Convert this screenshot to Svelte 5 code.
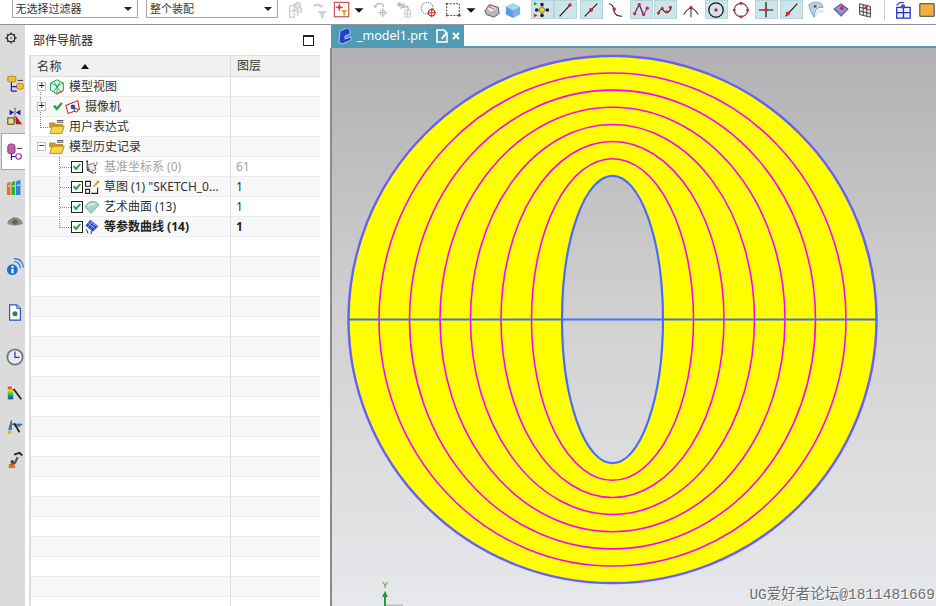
<script>
	const cellWidth = (t) => t.w ?? (t.on ? 23 : 18);

	// toolbar icons are listed by their centre, the gap before each follows from that
	const tools = [
		{ c: 310, i: 'ghostAsm' },
		{ c: 335, i: 'ghostFunnel' },
		{ c: 357, i: 'selBox' },
		{ c: 374, i: 'caret', w: 10 },
		{ c: 396, i: 'ghostCross' },
		{ c: 419, i: 'ghostDoc' },
		{ c: 444, i: 'sphere' },
		{ c: 468, i: 'dashRect' },
		{ c: 486, i: 'caret', w: 10 },
		{ c: 507, i: 'solid' },
		{ c: 528, i: 'cube' },
		{ c: 557, i: 'ctrl', on: true },
		{ c: 580, i: 'lineEnd', on: true },
		{ c: 606, i: 'lineMid', on: true },
		{ c: 631, i: 'scurve' },
		{ c: 656, i: 'poly', on: true },
		{ c: 680, i: 'wave', on: true },
		{ c: 706, i: 'fork' },
		{ c: 731, i: 'circleCentre', on: true },
		{ c: 756, i: 'circleDots' },
		{ c: 781, i: 'plus', on: true },
		{ c: 806, i: 'lineLow', on: true },
		{ c: 831, i: 'surf' },
		{ c: 856, i: 'diamond' },
		{ c: 880, i: 'gridDark' },
		{ c: 899, i: 'sep', w: 1 },
		{ c: 918, i: 'gridBlue' },
		{ c: 942, i: 'orange' }
	];
	let prev = 298;
	const placed = tools.map((t) => {
		const w = cellWidth(t);
		const gap = t.c - w / 2 - prev;
		prev = t.c - w / 2 + w;
		return { ...t, w, gap };
	});

	const rail = [
		{ i: 'asm', h: 33, gap: 22 },
		{ i: 'constraint', h: 33, gap: 0 },
		{ i: 'part', h: 37, gap: 0, on: true },
		{ i: 'books', h: 34, gap: 0 },
		{ i: 'eye', h: 34, gap: 0 },
		{ i: 'info', h: 34, gap: 12 },
		{ i: 'page', h: 34, gap: 11 },
		{ i: 'clock', h: 34, gap: 11 },
		{ i: 'rainbow', h: 33, gap: 2 },
		{ i: 'filterTool', h: 34, gap: 0 },
		{ i: 'robot', h: 34, gap: 0 }
	];

	const rows = [
		{ pad: 37, toggle: '+', icon: 'view', text: '模型视图', layer: '', conn: 'top' },
		{ pad: 37, toggle: '+', check: 'tick', icon: 'camera', text: '摄像机', layer: '', conn: 'mid' },
		{ pad: 46, icon: 'folder', text: '用户表达式', layer: '', conn: 'end' },
		{ pad: 37, toggle: '−', icon: 'folder', text: '模型历史记录', layer: '' },
		{ pad: 71, check: 'box', icon: 'datum', text: '基准坐标系 (0)', layer: '61', dim: true, conn: 'subtop' },
		{ pad: 71, check: 'box', icon: 'sketch', text: '草图 (1) "SKETCH_0...', layer: '1', conn: 'sub' },
		{ pad: 71, check: 'box', icon: 'surface', text: '艺术曲面 (13)', layer: '1', conn: 'sub' },
		{ pad: 71, check: 'box', icon: 'iso', text: '等参数曲线 (14)', layer: '1', bold: true, conn: 'subend' }
	];
	const blanks = Array.from({ length: 19 });

	const rx = [233.5, 203, 172.5, 142, 111.5, 81];
	const ry = [246.5, 229.4, 212.2, 195, 178, 160.8];
</script>

{#snippet icon(n)}
	<svg class="ico" viewBox="0 0 20 20" aria-hidden="true">
		{#if n === 'ghostAsm'}
			<path d="M4 6l5-2 0 6-5 2zM4 12v6h5v-8M9 10l4 1v6" fill="none" stroke="#c4c4c4" stroke-width="1.2" />
			<circle cx="13" cy="5" r="3.5" fill="#e2e2e2" stroke="#c4c4c4" /><circle cx="15" cy="10" r="3" fill="#e8e8e8" stroke="#c8c8c8" />
		{:else if n === 'ghostFunnel'}
			<path d="M7 11h11l-4 4v4h-3v-4z" fill="#d0d0d0" /><path d="M3 6q4-4 8 0l2-1" fill="none" stroke="#cfcfcf" stroke-width="2.4" />
		{:else if n === 'selBox'}
			<rect x="1.5" y="1.5" width="16" height="16" fill="#fff" stroke="#c8434a" stroke-width="1.2" />
			<path d="M7 3v8M3 7h8" stroke="#8c2020" /><circle cx="7" cy="7" r="2" fill="#e04040" />
			<path d="M9 10h7l-2.5 3v3h-2v-3z" fill="#e8a020" />
		{:else if n === 'caret'}
			<path d="M5 8h10l-5 5z" fill="#111" />
		{:else if n === 'ghostCross'}
			<path d="M3 7q2-5 7-4 3 1 3 4" fill="none" stroke="#bbb" stroke-width="1.5" /><path d="M1 5l3 3 2-3z" fill="#bbb" />
			<path d="M12 8v10M7 13h10" stroke="#aaa" /><circle cx="12" cy="13" r="3" fill="none" stroke="#bbb" />
		{:else if n === 'ghostDoc'}
			<circle cx="5" cy="4" r="2.5" fill="#bbb" /><circle cx="9" cy="5" r="2.5" fill="#c8c8c8" />
			<path d="M6 8l8-2 1 4" fill="none" stroke="#bbb" stroke-width="1.5" /><path d="M11 10h6v8h-6zM11 14h6M14 10v8" fill="none" stroke="#c4c4c4" />
		{:else if n === 'sphere'}
			<circle cx="8" cy="8" r="6.5" fill="none" stroke="#333" stroke-dasharray="1.4 1.4" />
			<circle cx="13" cy="13" r="3.5" fill="#fff" stroke="#c22" stroke-width="1.2" /><path d="M13 8v10M8 13h10" stroke="#c22" />
		{:else if n === 'dashRect'}
			<rect x="3" y="3" width="14" height="13" fill="none" stroke="#222" stroke-dasharray="2 1.5" />
			<circle cx="17" cy="16" r="1.6" fill="#d22" /><circle cx="3" cy="16" r="1.1" fill="#d22" /><circle cx="3" cy="3" r="1.1" fill="#d22" />
		{:else if n === 'solid'}
			<path d="M2 11l5-7 10 3 1 7-6 4-8-3z" fill="#b8b8b8" stroke="#555" /><path d="M5 8l6-2 4 3-7 3z" fill="#eee" /><path d="M7 7l6 2" stroke="#d44" />
		{:else if n === 'cube'}
			<path d="M2 6l8-4 8 4-8 4z" fill="#a8d8f0" /><path d="M2 6v9l8 4v-9z" fill="#5a9ae8" /><path d="M18 6v9l-8 4v-9z" fill="#7ab0f0" />
			<path d="M6 9l5 3v5" fill="none" stroke="#e88" />
		{:else if n === 'ctrl'}
			<path d="M10 6l4 4-4 4-4-4z" fill="#f4d020" stroke="#555" />
			<circle cx="10" cy="4" r="2" fill="#222" /><circle cx="10" cy="16" r="2" fill="#222" /><circle cx="4" cy="10" r="2" fill="#222" /><circle cx="16" cy="10" r="2" fill="#222" />
			<path d="M1 1l4 2-4 2z" fill="#1a9a30" /><path d="M1 14l4 2-4 2z" fill="#d22" />
		{:else if n === 'lineEnd'}
			<path d="M4 17L16 4" stroke="#111" stroke-width="1.2" /><circle cx="15.5" cy="4.5" r="2" fill="#d22" />
		{:else if n === 'lineMid'}
			<path d="M3 17L17 3" stroke="#111" stroke-width="1.2" /><circle cx="10" cy="10" r="2.2" fill="#d22" />
		{:else if n === 'scurve'}
			<path d="M2 3c6 0 5 6 6 9s3 5 9 5" fill="none" stroke="#222" stroke-width="1.2" /><circle cx="8" cy="9" r="2" fill="#d22" />
		{:else if n === 'poly'}
			<path d="M3 14L8 4l5 11 4-7" fill="none" stroke="#a030d0" stroke-width="1.2" /><path d="M4 12q3-8 5-6l3 9" fill="none" stroke="#222" stroke-width=".8" />
			<circle cx="3" cy="14" r="1.8" fill="#d22" /><circle cx="8" cy="4" r="1.8" fill="#d22" /><circle cx="13" cy="15" r="1.8" fill="#d22" /><circle cx="17" cy="8" r="1.8" fill="#d22" />
		{:else if n === 'wave'}
			<path d="M2 15c3-9 6-5 8-3s5 1 7-5" fill="none" stroke="#222" stroke-width="1.2" />
			<circle cx="3" cy="13" r="1.7" fill="#d22" /><circle cx="7" cy="8" r="1.7" fill="#d22" /><circle cx="12" cy="12" r="1.7" fill="#d22" /><circle cx="16" cy="7" r="1.7" fill="#d22" />
		{:else if n === 'fork'}
			<path d="M2 15Q10 1 18 15M10 7v11" fill="none" stroke="#333" stroke-width="1.2" /><circle cx="10" cy="7" r="1.8" fill="#d22" />
		{:else if n === 'circleCentre'}
			<circle cx="10" cy="10" r="8" fill="none" stroke="#111" stroke-width="1.4" /><circle cx="10" cy="10" r="2" fill="#d22" />
		{:else if n === 'circleDots'}
			<circle cx="10" cy="10" r="7.5" fill="none" stroke="#666" stroke-width="1.4" />
			<circle cx="10" cy="2.5" r="1.7" fill="#d22" /><circle cx="10" cy="17.5" r="1.7" fill="#d22" /><circle cx="2.5" cy="10" r="1.7" fill="#d22" /><circle cx="17.5" cy="10" r="1.7" fill="#d22" />
		{:else if n === 'plus'}
			<path d="M10 1v17M2 10h16" stroke="#111" stroke-width="1.3" /><circle cx="10" cy="10" r="2" fill="#d22" />
		{:else if n === 'lineLow'}
			<path d="M4 17L17 3" stroke="#111" stroke-width="1.2" /><circle cx="6.5" cy="14" r="2.2" fill="#d22" />
		{:else if n === 'surf'}
			<path d="M2 4Q10-1 16 3l2 4q-5-1-8 3-2 3-2 8-5-6-6-14z" fill="#b4d4ee" stroke="#7a9ec0" /><path d="M9 19q-1-7 5-9 3-1 5 0l-1 3q-4-1-6 1-2 2-1 5z" fill="#e4e8ec" />
			<circle cx="9" cy="6" r="1.6" fill="#d22" />
		{:else if n === 'diamond'}
			<path d="M10 3l8 6-8 8-8-8z" fill="#7a78c0" stroke="#4a4890" /><path d="M4 8l6-3 6 4-6 5z" fill="#9a98d8" /><circle cx="11" cy="8" r="2.2" fill="#d24" />
		{:else if n === 'gridDark'}
			<path d="M4 3l12 3v12L4 15zM8 4v12M12 5v12M4 7l12 3M4 11l12 3" fill="#f0f0f0" stroke="#333" />
			<circle cx="11" cy="7" r="1.5" fill="#d22" />
		{:else if n === 'gridBlue'}
			<path d="M3 7h15v12H3zM3 13h15M10.5 7v12" fill="#e8f0ff" stroke="#2233cc" stroke-width="1.4" />
			<path d="M3 5q3-5 8-3" fill="none" stroke="#3344cc" stroke-width="1.4" /><circle cx="10" cy="6" r="2.5" fill="#4455aa" />
		{:else if n === 'orange'}
			<path d="M2 3h16v14H2z" fill="#f0b040" stroke="#333" />
		{:else if n === 'gear'}
			<circle cx="10" cy="10" r="5.5" fill="none" stroke="#333" stroke-width="2" /><circle cx="10" cy="10" r="1.2" fill="#333" />
			<path d="M10 2v3M10 15v3M2 10h3M15 10h3M4.500 4.500l2 2M13.500 13.500l2 2M15.500 4.500l-2 2M6.500 13.500l-2 2" stroke="#333" stroke-width="2" />
		{:else if n === 'asm'}
			<path d="M6 1l5 1v5l-5 1-4-1V2z" fill="#f0c030" stroke="#b88010" /><path d="M12 10l4-1 3 1v5l-4 1-3-1z" fill="#f0c030" stroke="#b88010" />
			<path d="M6 8v10M6 13h6M6 18h6" stroke="#1818c8" stroke-width="1.3" /><path d="M13 6h6" stroke="#222" />
		{:else if n === 'constraint'}
			<path d="M4 2l5 3-5 3zM16 2l-5 3 5 3z" fill="#1818b0" /><path d="M10 0v16" stroke="#111" stroke-dasharray="2 1" />
			<rect x="2" y="11" width="7" height="7" fill="#f4e060" stroke="#333" /><path d="M11 18V9l7 9z" fill="#a82020" />
		{:else if n === 'part'}
			<path d="M2 4q0-3 4-3t4 3v6q0 2-4 2t-4-2z" fill="#c060a0" stroke="#803070" /><path d="M6 12v7M6 15h5" stroke="#1818c8" stroke-width="1.3" />
			<circle cx="14" cy="15" r="3" fill="none" stroke="#a03080" stroke-width="1.2" /><path d="M12 6h6" stroke="#222" />
		{:else if n === 'books'}
			<path d="M1 6l4-2v15H1z" fill="#e87020" /><path d="M6 5l4-2v16H6z" fill="#30b030" /><path d="M11 4l5-2v17h-5z" fill="#3080d8" /><path d="M2 9h3M7 9h3M12 8h4" stroke="#fff" />
		{:else if n === 'eye'}
			<path d="M1 13q9-11 18 0-9 4-18 0z" fill="#8a8a8a" /><circle cx="10" cy="11" r="3" fill="#606c30" /><path d="M2 11q8-9 16 0" fill="none" stroke="#555" />
		{:else if n === 'info'}
			<circle cx="7" cy="13" r="6" fill="#1a70d0" /><rect x="6" y="12" width="2.5" height="5" fill="#fff" /><circle cx="7.2" cy="9.8" r="1.3" fill="#fff" />
			<path d="M9 4q6 0 7 7M9 0.500q9 0 10.500 10" fill="none" stroke="#3a80d0" stroke-width="1.5" />
		{:else if n === 'page'}
			<path d="M4 2h8l4 4v13H4z" fill="#fff" stroke="#2a50c0" stroke-width="1.3" /><path d="M12 2v4h4" fill="#bcd" stroke="#2a50c0" /><circle cx="10" cy="12" r="2.8" fill="#208858" />
		{:else if n === 'clock'}
			<circle cx="10" cy="10" r="8.500" fill="#e8ecf4" stroke="#777" stroke-width="2" /><path d="M10 4v6.500h5" fill="none" stroke="#2040a0" stroke-width="1.4" />
		{:else if n === 'rainbow'}
			<defs><linearGradient id="rb" x1="0" y1="0" x2="0" y2="1"><stop offset="0" stop-color="#e02020" /><stop offset=".3" stop-color="#f0d020" /><stop offset=".6" stop-color="#20d040" /><stop offset="1" stop-color="#2030e0" /></linearGradient></defs>
			<rect x="2" y="3" width="6" height="14" fill="url(#rb)" /><path d="M8 5l9 12" stroke="#222" stroke-width="2" /><circle cx="8" cy="4" r="1.5" fill="#fff" />
		{:else if n === 'filterTool'}
			<path d="M6 4v10h-3zM6 8h12l-4 3" fill="#4a80d0" stroke="#2a60b0" /><path d="M9 7l6 10" stroke="#222" stroke-width="2" /><circle cx="4" cy="17" r="2" fill="#e8b020" />
		{:else if n === 'robot'}
			<path d="M4 16l6-3 3-6" fill="none" stroke="#555" stroke-width="2.5" /><path d="M9 4l6-2 3 3" fill="none" stroke="#222" stroke-width="2" /><path d="M3 15h7v4H3z" fill="#e87020" /><circle cx="7" cy="12" r="2" fill="#444" />
		{:else if n === 'view'}
			<path d="M10 1l8 4v9l-8 5-8-5V5z" fill="#e8f8ec" stroke="#18985a" stroke-width="1.2" /><path d="M2 5l8 4 8-4M10 9v10M6 3l8 13M14 3L6 16" fill="none" stroke="#18985a" />
			<path d="M9 18l6-3 4-1-3 3z" fill="#e85020" />
		{:else if n === 'tick'}
			<path d="M2 10l3-3 3 4 7-8 3 2-10 12z" fill="#18a838" />
		{:else if n === 'camera'}
			<path d="M1 8l15-6 2 11-14 5z" fill="#fff" stroke="#c82020" stroke-width="1.3" /><circle cx="10" cy="10" r="3" fill="#3a48b0" /><circle cx="14" cy="14" r="2.2" fill="#fff" stroke="#222" />
		{:else if n === 'folder'}
			<path d="M1 5h6l2 2h8v3H1z" fill="#d8a020" stroke="#a87810" /><path d="M1 18l3-9h15l-3 9z" fill="#f8d848" stroke="#a87810" /><path d="M10 2h8M10 4h8" stroke="#223" />
		{:else if n === 'datum'}
			<path d="M4 2v12l8 4M4 14l12-7" fill="none" stroke="#222" stroke-width="1.2" /><path d="M4 8l8-3 3 8-7 3z" fill="#e8e8e8" stroke="#555" /><circle cx="4" cy="3" r="1.2" fill="#22c" /><circle cx="14" cy="17" r="1.2" fill="#c22" /><path d="M15 3l2 3" stroke="#280" />
		{:else if n === 'sketch'}
			<path d="M2 3h6v6H2zM2 13h5v5H2zM9 18h8v-7" fill="#fff" stroke="#222" stroke-width="1.4" /><path d="M11 9l6-7 2 2-6 6z" fill="#e8a020" /><path d="M17 2l2 2" stroke="#d22" />
		{:else if n === 'surface'}
			<path d="M1 10Q6 2 12 3q4 0 7 5-4 2-6 6l-4 4z" fill="#a8d4c4" stroke="#70a898" /><path d="M5 9q4-4 9-2" fill="none" stroke="#d8f0e8" stroke-width="2" />
		{:else}
			<path d="M8 1l10 8-7 7L2 8z" fill="#2848c0" /><path d="M5 5l9 7M8 3l9 7M11 2L5 10M14 5l-6 8" stroke="#c8d8f8" stroke-width=".8" /><path d="M3 13l2 5M9 15v4" stroke="#222" stroke-width="1.2" />
		{/if}
	</svg>
{/snippet}

<div class="app">
	<header class="toolbar">
		<div class="combo first"><span>无选择过滤器</span><b></b></div>
		<div class="combo second"><span>整个装配</span><b></b></div>
		<div class="tools">
			{#each placed as t}
				<div class="tool" class:on={t.on} style:width="{t.w}px" style:margin-left="{t.gap}px">
					{#if t.i === 'sep'}<i class="sep"></i>{:else}{@render icon(t.i)}{/if}
				</div>
			{/each}
		</div>
	</header>

	<div class="body">
		<aside class="rail">
			<div class="gear">{@render icon('gear')}</div>
			{#each rail as r}
				<div class="rail-item" class:on={r.on} style:height="{r.h}px" style:margin-top="{r.gap}px">{@render icon(r.i)}</div>
			{/each}
		</aside>

		<section class="nav">
			<div class="nav-head">
				<span>部件导航器</span>
				<i class="maximize"></i>
			</div>
			<div class="table">
				<div class="row head">
					<div class="name">名称<i class="sort"></i></div>
					<div class="layer">图层</div>
				</div>
				{#each rows as r}
					<div class="row" class:dim={r.dim} class:bold={r.bold}>
						<div class="name" style:padding-left="{r.pad - 31}px">
							{#if r.conn}<i class="conn {r.conn}"></i>{/if}
							{#if r.toggle}<span class="toggle">{r.toggle}</span>{/if}
							{#if r.check === 'box'}<span class="check">{@render icon('tick')}</span>{/if}
							{#if r.check === 'tick'}<span class="tick">{@render icon('tick')}</span>{/if}
							<span class="node">{@render icon(r.icon)}</span>
							<span class="label">{r.text}</span>
						</div>
						<div class="layer">{r.layer}</div>
					</div>
				{/each}
				{#each blanks as _}
					<div class="row"><div class="name"></div><div class="layer"></div></div>
				{/each}
			</div>
		</section>

		<main class="work">
			<div class="tabs">
				<div class="tab">
					<svg class="part-ico" viewBox="0 0 16 16" aria-hidden="true">
						<path d="M3 3l7-3 3 2v4l-5 2v3l6-2v3l-9 4-3-2z" fill="#1c44d0" stroke="#dce8ff" stroke-width=".7" />
					</svg>
					<span class="tab-name">_model1.prt</span>
					<svg class="tab-doc" viewBox="0 0 14 14" aria-hidden="true">
						<path d="M2 1h7l3 3v9H2z" fill="none" stroke="#fff" stroke-width="1.5" /><path d="M6 9l5-6 1.500 1.500-5 6z" fill="#fff" />
					</svg>
					<svg class="tab-x" viewBox="0 0 8 8" aria-hidden="true"><path d="M1 1l6 6M7 1L1 7" stroke="#fff" stroke-width="2" /></svg>
				</div>
			</div>
			<div class="canvas">
				<svg class="drawing" viewBox="0 0 604 558" aria-hidden="true">
					<defs>
						<linearGradient id="bg" x1="0" y1="0" x2="0" y2="1">
							<stop offset="0" stop-color="#b1b1b3" />
							<stop offset=".5" stop-color="#d2d2d3" />
							<stop offset="1" stop-color="#e7e8eb" />
						</linearGradient>
					</defs>
					<rect width="604" height="558" fill="url(#bg)" />
					<path
						fill="#ffff00"
						fill-rule="evenodd"
						d="M16.5 271.5a264 263.6 0 1 0 528 0a264 263.6 0 1 0-528 0zM230 271.5a50.5 143.7 0 1 0 101 0a50.5 143.7 0 1 0-101 0z"
					/>
					{#each rx as x, k}
						<ellipse cx="280.5" cy="271.5" rx={x} ry={ry[k]} fill="none" stroke="#f0f" stroke-width="1.6" />
					{/each}
					<ellipse cx="280.5" cy="271.5" rx="264" ry="263.6" fill="none" stroke="#f0f" stroke-width="2.6" opacity=".5" />
					<ellipse cx="280.5" cy="271.5" rx="264" ry="263.6" fill="none" stroke="#4a6cf8" stroke-width="2" />
					<ellipse cx="280.5" cy="271.5" rx="50.5" ry="143.7" fill="none" stroke="#4a6cf8" stroke-width="2.2" />
					<path d="M16.5 271.5h528" stroke="#4a6cf8" stroke-width="2" />
				</svg>
				<div class="triad">
					<span>Y</span>
					<svg viewBox="0 0 24 16" aria-hidden="true">
						<path d="M6 1l3 6H7v9H5V7H3z" fill="#1f9a45" />
						<rect x="7" y="14.500" width="17" height="1.500" fill="#b9bcc0" />
					</svg>
				</div>
				<div class="mark">UG爱好者论坛@1811481669</div>
			</div>
		</main>
	</div>
</div>

<style>
	:global(body) {
		margin: 0;
		background: #fff;
		overflow: hidden;
	}

	.app {
		width: 936px;
		height: 606px;
		display: flex;
		flex-direction: column;
		overflow: hidden;
		font-family: "Noto Sans", "Noto Sans CJK SC", sans-serif;
		font-size: 12px;
		color: #333;
	}

	.ico {
		display: block;
		width: 100%;
		height: 100%;
	}

	/* top toolbar */
	.toolbar {
		height: 24px;
		flex: none;
		display: flex;
		border-bottom: 1px solid #8f9496;
		overflow: hidden;
	}

	.combo {
		box-sizing: border-box;
		height: 19px;
		margin-top: -1px;
		border: 1px solid #a8a8a8;
		display: flex;
		align-items: center;
		justify-content: space-between;
		padding: 0 5px 0 3px;
		font-size: 11px;
		line-height: 17px;
	}

	.combo b {
		width: 0;
		border: 4px solid transparent;
		border-top-color: #222;
		border-bottom: 0;
	}

	.first {
		width: 134px;
		margin-left: 11.5px;
	}

	.second {
		width: 140px;
		margin-left: 8px;
	}

	.tools {
		display: flex;
		align-items: flex-start;
		margin-left: 5px;
	}

	.tool {
		flex: none;
		box-sizing: border-box;
		height: 19px;
		display: flex;
		align-items: center;
		justify-content: center;
	}

	.tool :global(svg) {
		width: 18px;
		height: 18px;
		flex: none;
	}

	.tool.on {
		background: #cde5ea;
		border: 1px solid #b4d6dd;
	}

	.sep {
		display: block;
		width: 1px;
		height: 20px;
		background: #c8c8c8;
	}

	.body {
		flex: 1;
		min-height: 0;
		display: flex;
	}

	/* resource bar */
	.rail {
		width: 25px;
		flex: none;
		background: #dbdbdb;
		display: flex;
		flex-direction: column;
		align-items: center;
	}

	.gear {
		width: 14px;
		height: 14px;
		margin: 6px 4px 0 0;
	}

	.rail-item {
		width: 100%;
		flex: none;
		box-sizing: border-box;
		padding: 7px 0 0 6px;
	}

	.rail-item :global(svg) {
		width: 18px;
		height: 20px;
	}

	.rail-item.on {
		background: #fff;
		border: 1px solid #a8a8a8;
		border-right: 0;
		margin-left: 1px;
		width: 24px;
		padding: 8px 0 0 4px;
	}

	/* part navigator */
	.nav {
		width: 305px;
		flex: none;
		box-sizing: border-box;
		padding-left: 4px;
		padding-right: 10px;
		background: #fff;
	}

	.nav-head {
		height: 30px;
		display: flex;
		align-items: center;
		justify-content: space-between;
		padding: 0 6px 0 4px;
		color: #222;
	}

	.maximize {
		width: 9px;
		height: 8px;
		border: 1px solid #222;
		border-top-width: 2px;
		margin-top: 1px;
	}

	.table {
		border-left: 2px solid #dcdcdc;
		border-top: 1px solid #dcdcdc;
	}

	.row {
		display: flex;
		height: 20px;
		box-sizing: border-box;
		border-bottom: 1px solid #ececec;
		line-height: 19px;
	}

	.row:nth-child(odd) {
		background: #f8f8f8;
	}

	.row.head {
		height: 21px;
		background: #f1f1f1;
		border-bottom: 1px solid #dcdcdc;
	}

	.row.head .name {
		padding-left: 6px;
		letter-spacing: 0.5px;
	}

	.row.dim {
		color: #a4a4a4;
	}

	.row.bold {
		font-weight: 700;
		color: #222;
	}

	.name {
		position: relative;
		width: 200px;
		flex: none;
		box-sizing: border-box;
		display: flex;
		align-items: center;
		white-space: nowrap;
		overflow: hidden;
		border-right: 1px solid #dedede;
	}

	.layer {
		padding-left: 5px;
	}

	.head .layer {
		padding-left: 6px;
	}

	.sort {
		width: 0;
		margin-left: 19px;
		border: 4.5px solid transparent;
		border-top: 0;
		border-bottom: 5px solid #111;
	}

	.toggle {
		width: 7px;
		height: 7px;
		flex: none;
		border: 1px solid #c0c0c0;
		background: #fff;
		color: #111;
		font: 11px/7px "Liberation Mono", monospace;
		text-align: center;
		z-index: 1;
	}

	.check {
		box-sizing: border-box;
		width: 12px;
		height: 12px;
		flex: none;
		margin-right: -2px;
		border: 1px solid #222;
		background: #fff;
	}

	.tick {
		width: 12px;
		height: 13px;
		flex: none;
		margin: 0 -2px 0 6px;
	}

	.node {
		width: 16px;
		height: 16px;
		flex: none;
		margin: 0 4px 0 3px;
	}

	/* tree connectors, on top of the row */
	.conn {
		position: absolute;
		pointer-events: none;
	}

	.conn.top {
		left: 9px;
		top: 10px;
		height: 10px;
		border-left: 1px dotted #888;
	}

	.conn.mid {
		left: 9px;
		top: 0;
		height: 20px;
		border-left: 1px dotted #888;
	}

	.conn.end {
		left: 9px;
		top: 0;
		height: 10px;
		width: 9px;
		border-left: 1px dotted #888;
		border-bottom: 1px dotted #888;
	}

	.conn.subtop,
	.conn.sub {
		left: 28px;
		top: 0;
		height: 20px;
		border-left: 1px dotted #888;
	}

	.conn.subtop::after,
	.conn.sub::after {
		content: "";
		position: absolute;
		top: 10px;
		left: 0;
		width: 11px;
		border-top: 1px dotted #888;
	}

	.conn.subend {
		left: 28px;
		top: 0;
		height: 10px;
		width: 11px;
		border-left: 1px dotted #888;
		border-bottom: 1px dotted #888;
	}

	/* graphics window */
	.work {
		flex: 1;
		min-width: 0;
		display: flex;
		flex-direction: column;
		padding-left: 1px;
	}

	.tabs {
		height: 21px;
		flex: none;
		border-bottom: 2px solid #529bb5;
	}

	.tab {
		width: 133px;
		height: 21px;
		background: #529bb5;
		display: flex;
		align-items: center;
		color: #fff;
		font-size: 12.5px;
	}

	.part-ico {
		width: 16px;
		height: 16px;
		margin-left: 6px;
	}

	.tab-name {
		margin-left: 4px;
	}

	.tab-doc {
		width: 14px;
		height: 14px;
		margin-left: 7px;
	}

	.tab-x {
		width: 8px;
		height: 8px;
		margin-left: 3px;
	}

	.canvas {
		position: relative;
		flex: 1;
		min-height: 0;
		margin-left: -1px;
		border-left: 2px solid #868c92;
		overflow: hidden;
	}

	.drawing {
		display: block;
		width: 604px;
		height: 558px;
	}

	.triad {
		position: absolute;
		left: 47px;
		bottom: 0;
		width: 24px;
	}

	.triad span {
		display: block;
		width: 12px;
		text-align: center;
		color: #2b9a56;
		font: 9px/9px "Liberation Sans", sans-serif;
	}

	.triad svg {
		display: block;
		width: 24px;
		height: 16px;
	}

	.mark {
		position: absolute;
		right: 1px;
		bottom: 2px;
		font-family: "Liberation Mono", "Noto Sans CJK SC", monospace;
		font-size: 14.5px;
		line-height: 18px;
		white-space: nowrap;
		color: #6e7072;
		text-shadow: 1px 1px 0 #fff;
	}
</style>
